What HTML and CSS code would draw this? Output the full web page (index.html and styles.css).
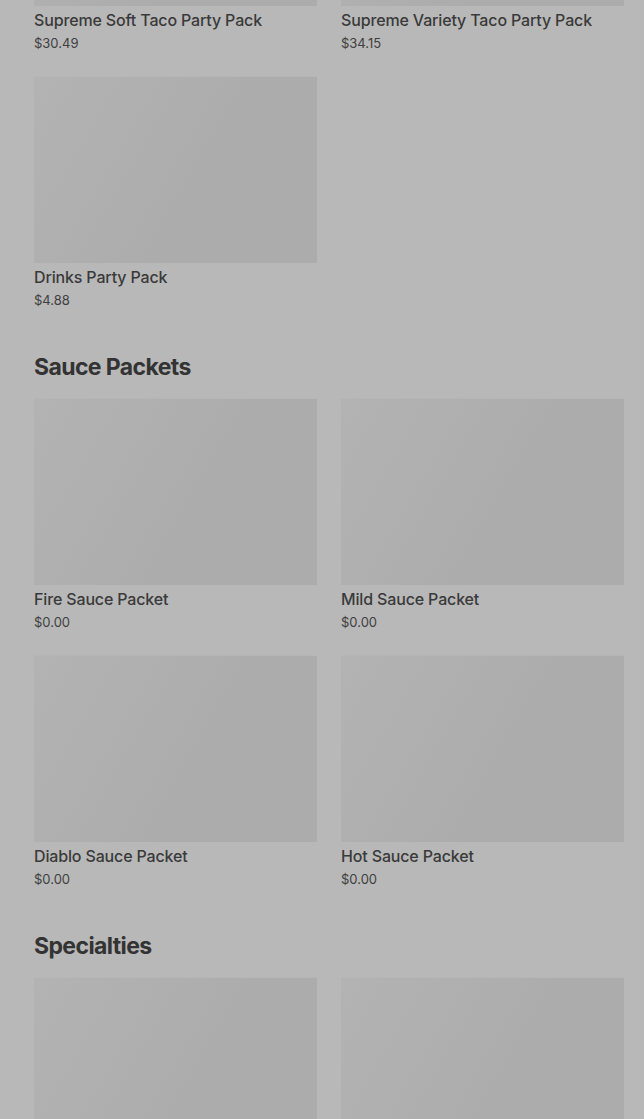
FILE: index.html
```html
<!DOCTYPE html>
<html lang="en">
<head>
  <meta charset="UTF-8">
  <title>Menu</title>
  <link rel="stylesheet" href="styles.css">
</head>
<body>

  <main class="menu">
    <section class="section">
      <div class="grid">
        <div class="item">
          <div class="thumb"></div>
          <p class="name">Supreme Soft Taco Party Pack</p>
          <p class="price">$30.49</p>
        </div>
        <div class="item">
          <div class="thumb"></div>
          <p class="name">Supreme Variety Taco Party Pack</p>
          <p class="price">$34.15</p>
        </div>
        <div class="item">
          <div class="thumb"></div>
          <p class="name">Drinks Party Pack</p>
          <p class="price">$4.88</p>
        </div>
      </div>
    </section>

    <section class="section">
      <h2>Sauce Packets</h2>
      <div class="grid">
        <div class="item">
          <div class="thumb"></div>
          <p class="name">Fire Sauce Packet</p>
          <p class="price">$0.00</p>
        </div>
        <div class="item">
          <div class="thumb"></div>
          <p class="name">Mild Sauce Packet</p>
          <p class="price">$0.00</p>
        </div>
        <div class="item">
          <div class="thumb"></div>
          <p class="name">Diablo Sauce Packet</p>
          <p class="price">$0.00</p>
        </div>
        <div class="item">
          <div class="thumb"></div>
          <p class="name">Hot Sauce Packet</p>
          <p class="price">$0.00</p>
        </div>
      </div>
    </section>

    <section class="section">
      <h2>Specialties</h2>
      <div class="grid">
        <div class="item">
          <div class="thumb"></div>
        </div>
        <div class="item">
          <div class="thumb"></div>
        </div>
      </div>
    </section>
  </main>

</body>
</html>
```

FILE: styles.css
```css
* { margin: 0; padding: 0; box-sizing: border-box; }

body {
  font-family: 'Inter', 'Noto Sans', sans-serif;
  background: #b8b8b8;
  color: #353535;
  overflow: hidden;
}

/* page is scrolled: first row of thumbs is cut off */
.menu {
  margin-top: -181px;
  padding: 0 20px 0 34px;
}

.section + .section {
  margin-top: 42px;
}

.section h2 {
  font-size: 23px;
  line-height: 32px;
  font-weight: 700;
  letter-spacing: -0.6px;
  color: #333;
  margin-bottom: 15px;
}

.grid {
  display: grid;
  grid-template-columns: 283px 283px;
  column-gap: 24px;
  row-gap: 24px;
}

.thumb {
  height: 187px;
  background: linear-gradient(120deg, #b3b3b3, #acacac 60%);
  border-top: 1px solid #b6b6b6;
}

.name {
  margin-top: 4px;
  font-size: 16px;
  line-height: 20px;
  font-weight: 500;
  letter-spacing: -0.15px;
  color: #3a3a3a;
}

.price {
  margin-top: 4px;
  font-size: 13px;
  line-height: 18px;
  color: #404040;
}
```
